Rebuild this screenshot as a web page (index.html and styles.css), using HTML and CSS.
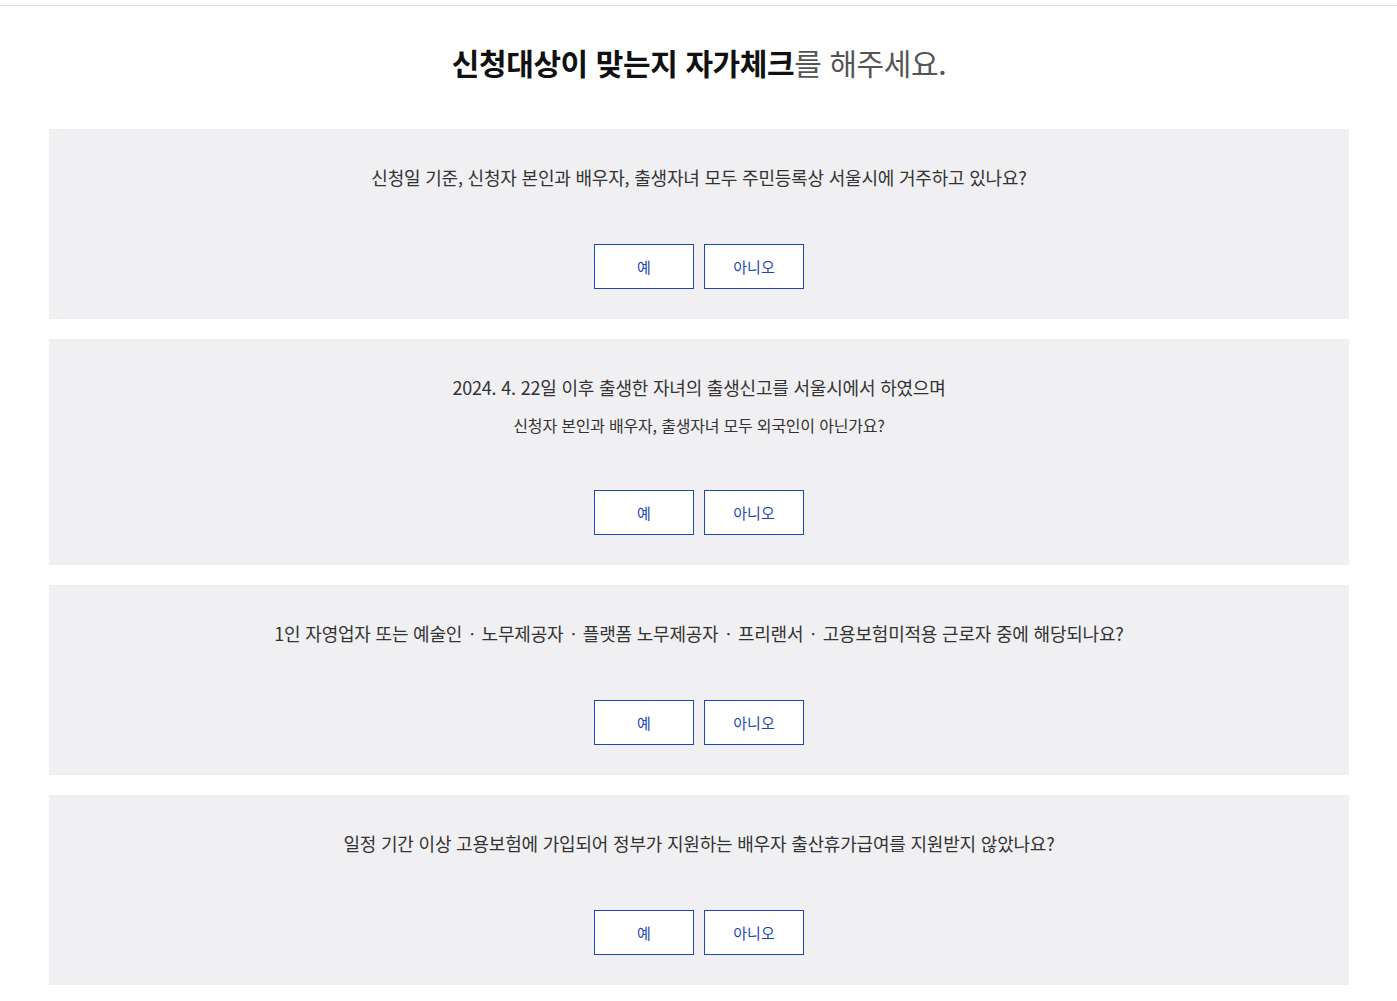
FILE: index.html
```html
<!DOCTYPE html>
<html lang="ko">
<head>
    <meta charset="UTF-8">
    <meta name="viewport" content="width=device-width, initial-scale=1.0">
    <title>자가체크</title>
    <link rel="stylesheet" href="styles.css">
</head>
<body>
    <div class="top-line"></div>
    <div class="wrap">
        <h2 class="title"><strong>신청대상이 맞는지 자가체크</strong>를 해주세요.</h2>

        <div class="check-box">
            <p class="question">신청일 기준, 신청자 본인과 배우자, 출생자녀 모두 주민등록상 서울시에 거주하고 있나요?</p>
            <div class="btns">
                <button class="btn">예</button>
                <button class="btn">아니오</button>
            </div>
        </div>

        <div class="check-box">
            <p class="question">2024. 4. 22일 이후 출생한 자녀의 출생신고를 서울시에서 하였으며</p>
            <p class="sub">신청자 본인과 배우자, 출생자녀 모두 외국인이 아닌가요?</p>
            <div class="btns">
                <button class="btn">예</button>
                <button class="btn">아니오</button>
            </div>
        </div>

        <div class="check-box">
            <p class="question">1인 자영업자 또는 예술인<span class="dot">ㆍ</span>노무제공자<span class="dot">ㆍ</span>플랫폼 노무제공자<span class="dot">ㆍ</span>프리랜서<span class="dot">ㆍ</span>고용보험미적용 근로자 중에 해당되나요?</p>
            <div class="btns">
                <button class="btn">예</button>
                <button class="btn">아니오</button>
            </div>
        </div>

        <div class="check-box">
            <p class="question">일정 기간 이상 고용보험에 가입되어 정부가 지원하는 배우자 출산휴가급여를 지원받지 않았나요?</p>
            <div class="btns">
                <button class="btn">예</button>
                <button class="btn">아니오</button>
            </div>
        </div>
    </div>
</body>
</html>
```

FILE: styles.css
```css
body {
    margin: 0;
    background: #fff;
    font-family: "Noto Sans CJK KR", "Noto Sans", sans-serif;
    color: #333;
}
.top-line {
    margin-top: 5px;
    height: 1px;
    background: #dcdcdc;
}
.wrap {
    width: 1300px;
    margin: 0 auto;
    padding-left: 1px;
}
.title {
    margin: 0;
    padding: 37px 0 48px;
    text-align: center;
    font-size: 30px;
    line-height: 38px;
    font-weight: 400;
    color: #555;
    letter-spacing: -0.4px;
}
.title strong {
    color: #111;
    font-weight: 700;
}
.check-box {
    background: #f0f0f2;
    margin-bottom: 20px;
    padding: 35px 0 30px;
    text-align: center;
}
.question {
    margin: 0;
    font-size: 18px;
    line-height: 26px;
    letter-spacing: -0.2px;
    color: #333;
}
.dot {
    margin: 0 1.5px;
}
.sub {
    margin: 15px 0 0;
    font-size: 16px;
    line-height: 21px;
    letter-spacing: -0.2px;
    color: #333;
}
.btns {
    margin-top: 54px;
    display: flex;
    justify-content: center;
    gap: 10px;
}
.btn {
    width: 100px;
    height: 45px;
    background: #fff;
    border: 1px solid #1d48b3;
    color: #1d48b3;
    font-family: inherit;
    font-size: 15px;
    cursor: pointer;
}
```
